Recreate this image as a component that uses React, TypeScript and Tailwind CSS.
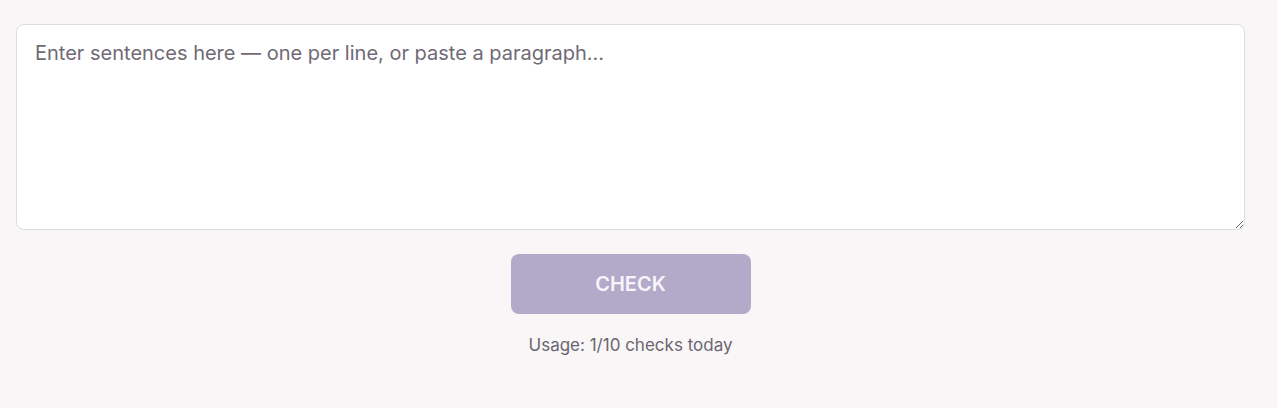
import React from "react";

export default function App() {
  return (
    <div className="min-h-[408px] w-full bg-[#f8f6f7] pt-6 pr-8 pl-4 font-['Inter',sans-serif]">
      <textarea
        className="block h-[206px] w-full resize-y rounded-lg border border-[#e0dbe3] bg-white px-[18px] py-[14px] text-[20px] leading-[28px] text-[#3a3540] outline-none placeholder:text-[#706a75]"
        placeholder="Enter sentences here — one per line, or paste a paragraph..."
      />
      <div className="mt-6 flex flex-col items-center">
        <button
          className="h-[60px] w-[240px] rounded-lg bg-[#b3a9c9] text-[20px] font-semibold text-[#f7f4fa]"
          disabled
          type="button"
        >
          CHECK
        </button>
        <p className="mt-[19px] text-[17px] text-[#6b6570]">
          Usage: 1/10 checks today
        </p>
      </div>
    </div>
  );
}
